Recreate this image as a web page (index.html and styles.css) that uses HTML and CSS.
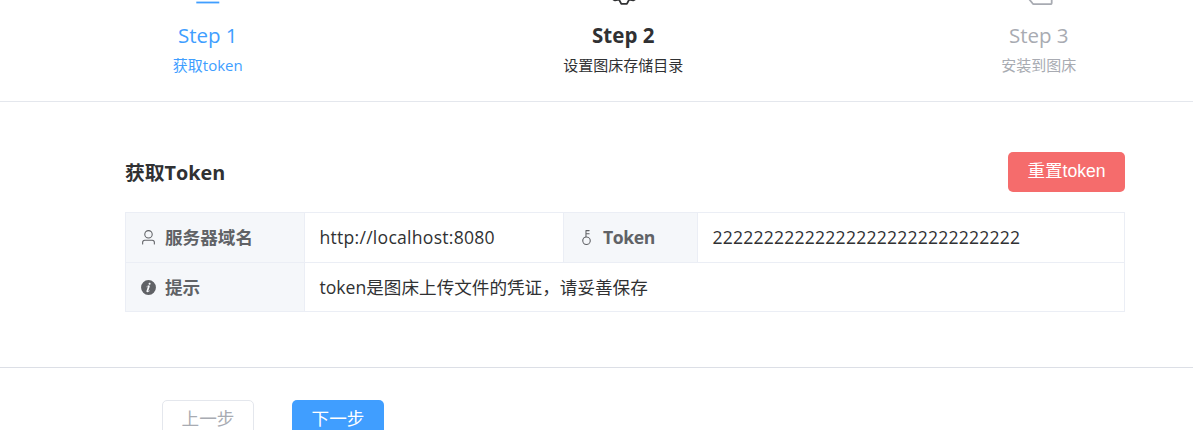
FILE: index.html
```html
<!DOCTYPE html>
<html lang="zh-CN">
<head>
<meta charset="utf-8">
<title>Token</title>
<link rel="stylesheet" href="styles.css">
</head>
<body>
<div class="page">
  <header class="steps">
    <div class="step step-process">
      <svg class="step-icon" viewBox="0 0 36 36"><path d="M6.300 33.500h23"/></svg>
      <div class="step-title">Step 1</div>
      <div class="step-desc">获取token</div>
    </div>
    <div class="step step-active">
      <svg class="step-icon" viewBox="0 0 36 36"><path d="M8 30.500l2 .8 4-.8 2.300 4.400h5.600l2.300-4.400 4 .8 2-.8"/></svg>
      <div class="step-title">Step 2</div>
      <div class="step-desc">设置图床存储目录</div>
    </div>
    <div class="step step-wait">
      <svg class="step-icon" viewBox="0 0 36 36"><path d="M8 30l3.500 4.300q.8.900 2 .9H29.500q1.200 0 1.200-1.200v-6"/></svg>
      <div class="step-title">Step 3</div>
      <div class="step-desc">安装到图床</div>
    </div>
  </header>
  <main class="content">
    <div class="heading">
      <h2 class="title">获取Token</h2>
      <button class="btn btn-danger">重置token</button>
    </div>
    <div class="table">
      <div class="label"><svg class="icon" viewBox="0 0 1024 1024"><path fill="currentColor" d="M512 512a192 192 0 1 0 0-384 192 192 0 0 0 0 384zm0 64a256 256 0 1 1 0-512 256 256 0 0 1 0 512zm320 320v-96a96 96 0 0 0-96-96H288a96 96 0 0 0-96 96v96a32 32 0 1 1-64 0v-96a160 160 0 0 1 160-160h448a160 160 0 0 1 160 160v96a32 32 0 1 1-64 0z"/></svg><span>服务器域名</span></div>
      <div class="value"><span class="url">http://localhost:8080</span></div>
      <div class="label"><svg class="icon" viewBox="0 0 1024 1024"><path fill="currentColor" d="M448 456.064V96a32 32 0 0 1 32-32.064L672 64a32 32 0 0 1 0 64H512v128h160a32 32 0 0 1 0 64H512v128a256 256 0 1 1-64 8.064zM512 896a192 192 0 1 0 0-384 192 192 0 0 0 0 384z"/></svg><span class="key-name">Token</span></div>
      <div class="value"><span class="digits">222222222222222222222222222222</span></div>
      <div class="label"><svg class="icon" viewBox="0 0 1024 1024"><path fill="currentColor" d="M512 64a448 448 0 1 1 0 896.064A448 448 0 0 1 512 64zm67.200 275.072c33.280 0 60.288-23.104 60.288-57.344s-27.072-57.344-60.288-57.344c-33.280 0-60.160 23.104-60.160 57.344s26.880 57.344 60.160 57.344zM590.912 699.200c0-6.848 2.368-24.640 1.024-34.752l-52.608 60.544c-10.880 11.456-24.512 19.392-30.912 17.280a12.992 12.992 0 0 1-8.256-14.720l87.680-276.992c7.168-35.136-12.544-67.200-54.336-71.296-44.096 0-108.992 44.736-148.480 101.504 0 6.784-1.280 23.680.064 33.792l52.544-60.608c10.880-11.328 23.552-19.328 29.952-17.152a12.800 12.800 0 0 1 7.808 16.128L388.480 728.576c-10.048 32.256 8.960 63.872 55.040 71.040 67.840 0 107.904-43.648 147.456-100.416z"/></svg><span>提示</span></div>
      <div class="value wide">token是图床上传文件的凭证，请妥善保存</div>
    </div>
  </main>
  <footer class="footer">
    <button class="btn btn-plain">上一步</button>
    <button class="btn btn-primary">下一步</button>
  </footer>
</div>
</body>
</html>
```
FILE: styles.css
```css
* { box-sizing: border-box; }
body {
  margin: 0;
  overflow: hidden;
  font-family: "Open Sans", "Noto Sans CJK SC", sans-serif;
  color: #303133;
}
.page { height: 430px; overflow: hidden; }
.steps {
  display: flex;
  height: 102px;
  border-bottom: 1px solid #e4e7ed;
}
.step {
  flex: none;
  width: 415.500px;
  display: flex;
  flex-direction: column;
  align-items: center;
  white-space: nowrap;
}
.step-icon {
  width: 36px;
  height: 36px;
  margin-top: -31px;
  fill: none;
  stroke: currentColor;
  stroke-width: 1.800;
  stroke-linejoin: round;
  flex: none;
}
.step-title { margin-top: 11px; font-size: 20.500px; line-height: 38px; }
.step-desc { font-size: 15px; line-height: 22px; }
.step-process { color: #409eff; }
.step-active .step-title { font-weight: 700; }
.step-wait { color: #a8abb2; }
.content { padding: 50px 68px 0 125px; height: 265px; }
.heading { display: flex; justify-content: space-between; align-items: center; height: 40px; }
.title { margin: 0; padding-top: 2px; font-size: 19.800px; line-height: 40px; font-weight: 700; }
.btn {
  height: 40px;
  padding: 0 0 2px;
  border: 1px solid transparent;
  border-radius: 5px;
  font: 17.600px/36px "Liberation Sans", "Noto Sans CJK SC", sans-serif;
}
.btn-danger { width: 117px; background: #f56c6c; color: #fff; }
.table {
  display: grid;
  grid-template-columns: 179px 259px 134px 427px;
  grid-template-rows: 50px 49px;
  width: 1000px;
  margin-top: 20px;
  border-top: 1px solid #ebeef5;
  border-right: 1px solid #ebeef5;
  font-size: 17.600px;
}
.label, .value {
  display: flex;
  align-items: center;
  border-left: 1px solid #ebeef5;
  border-bottom: 1px solid #ebeef5;
  padding: 0 0 2px 14px;
  white-space: nowrap;
}
.value { padding-left: 14.500px; }
.label { background: #f5f7fa; color: #606266; font-weight: 700; }
.wide { grid-column: span 3; }
.icon { width: 17px; height: 17px; margin: 2px 8px 0 0; flex: none; }
.url { letter-spacing: 0.250px; }
.digits { letter-spacing: 0.200px; }
.key-name { letter-spacing: -0.400px; }
.footer {
  display: flex;
  gap: 38px;
  padding: 32px 0 0 162px;
  border-top: 1px solid #dcdfe6;
}
.btn-plain { width: 92px; background: #fff; border-color: #e4e7ed; color: #a8abb2; }
.btn-primary { width: 92px; background: #409eff; color: #fff; }
```
